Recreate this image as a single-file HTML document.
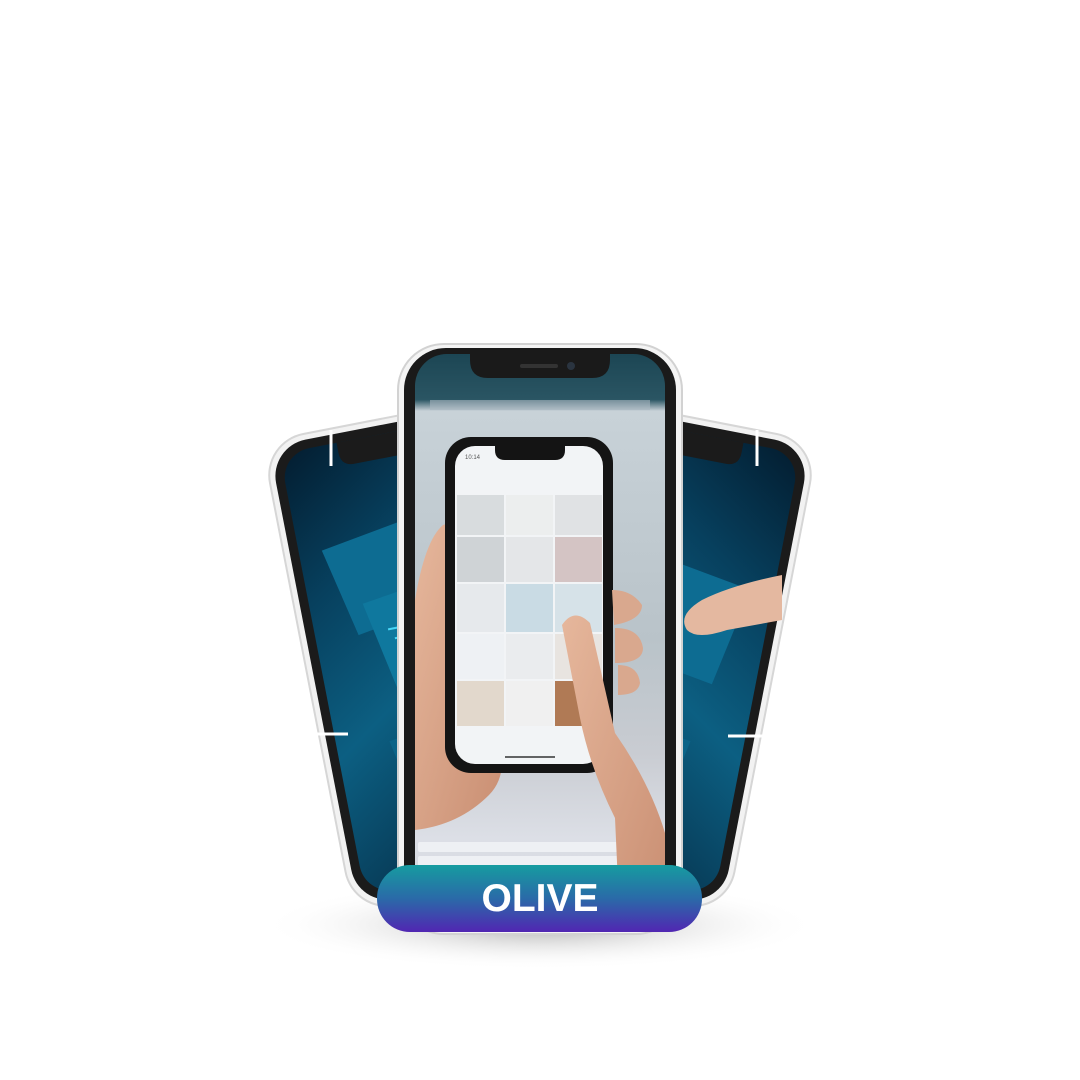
<!DOCTYPE html>
<html><head><meta charset="utf-8"><style>
html,body{margin:0;padding:0;background:#fff;width:1080px;height:1080px;overflow:hidden}
svg{display:block}
</style></head><body>
<svg width="1080" height="1080" viewBox="0 0 1080 1080" xmlns="http://www.w3.org/2000/svg">
<defs>
<linearGradient id="side" x1="0" y1="0" x2="0.4" y2="1">
<stop offset="0" stop-color="#031d30"/><stop offset="0.3" stop-color="#07405e"/><stop offset="0.6" stop-color="#0c5f82"/><stop offset="1" stop-color="#06304a"/>
</linearGradient>
<linearGradient id="badge" x1="0" y1="0" x2="0" y2="1">
<stop offset="0" stop-color="#169ca0"/><stop offset="0.5" stop-color="#2a6aa8"/><stop offset="1" stop-color="#5126b2"/>
</linearGradient>
<linearGradient id="photo" x1="0" y1="0" x2="0" y2="1">
<stop offset="0" stop-color="#1c4654"/><stop offset="0.08" stop-color="#2a5563"/><stop offset="0.1" stop-color="#c8d2d8"/><stop offset="0.5" stop-color="#b9c3c9"/><stop offset="0.7" stop-color="#c9ccd2"/><stop offset="0.85" stop-color="#dcdfe6"/><stop offset="1" stop-color="#d0d3da"/>
</linearGradient>
<radialGradient id="shadow" cx="0.5" cy="0.5" r="0.5">
<stop offset="0" stop-color="#8a8a8a" stop-opacity="0.7"/><stop offset="1" stop-color="#ffffff" stop-opacity="0"/>
</radialGradient>
<linearGradient id="skin" x1="0" y1="0" x2="1" y2="1">
<stop offset="0" stop-color="#e6b79c"/><stop offset="1" stop-color="#c98e72"/>
</linearGradient>
</defs>

<ellipse cx="540" cy="925" rx="280" ry="45" fill="url(#shadow)"/>

<g transform="rotate(-11 262 442)">
<rect x="262" y="442" width="290" height="480" rx="42" fill="#f2f2f2" stroke="#d6d6d6" stroke-width="2"/>
<rect x="268" y="448" width="278" height="468" rx="37" fill="#1b1b1b"/>
<rect x="277" y="457" width="260" height="450" rx="30" fill="url(#side)"/>
<path d="M335 457 h130 v10 q0 14 -14 14 h-102 q-14 0 -14 -14z" fill="#1b1b1b"/>
<polygon points="300,560 420,540 440,630 320,650" fill="#0d6c92"/>
<polygon points="330,620 470,600 480,700 350,720" fill="#0f789e"/>
<polygon points="330,760 480,740 490,840 350,860" fill="#0b6488"/>
<g fill="none" stroke="#4fe0ff" stroke-width="2" opacity="0.9"><path d="M350 650 h40 M355 660 h45 M360 670 h40 M365 680 h38"/></g>
</g>
<g transform="translate(1080 0) scale(-1 1) rotate(-11 262 442)">
<rect x="262" y="442" width="290" height="480" rx="42" fill="#f2f2f2" stroke="#d6d6d6" stroke-width="2"/>
<rect x="268" y="448" width="278" height="468" rx="37" fill="#1b1b1b"/>
<rect x="277" y="457" width="260" height="450" rx="30" fill="url(#side)"/>
<path d="M335 457 h130 v10 q0 14 -14 14 h-102 q-14 0 -14 -14z" fill="#1b1b1b"/>
<polygon points="300,600 420,580 440,680 320,700" fill="#0d6c92"/>
<polygon points="330,760 480,740 490,840 350,860" fill="#0b6488"/>
</g>
<path d="M782 575 q-50 10 -80 25 q-25 15 -15 30 q10 10 40 0 l55 -10z" fill="#e4b8a0"/>

<g stroke="#fff" stroke-width="3"><line x1="331" y1="430" x2="331" y2="466"/><line x1="312" y1="734" x2="348" y2="734"/><line x1="757" y1="430" x2="757" y2="466"/><line x1="728" y1="736" x2="766" y2="736"/></g>

<rect x="398" y="344" width="284" height="590" rx="46" fill="#f4f4f4" stroke="#d2d2d2" stroke-width="2"/>
<rect x="404" y="348" width="272" height="580" rx="42" fill="#1a1a1a"/>
<rect x="415" y="354" width="250" height="570" rx="32" fill="url(#photo)"/>
<rect x="430" y="400" width="220" height="10" fill="#a9b6c0" opacity="0.6"/>
<g fill="#eef0f4"><rect x="418" y="842" width="230" height="10" rx="2"/><rect x="418" y="856" width="230" height="10" rx="2"/></g>
<path d="M415 600 q10 -60 28 -75 q12 -5 14 20 l2 100 q20 60 40 90 q10 40 -10 60 q-30 30 -74 35z" fill="url(#skin)"/>
<rect x="445" y="437" width="168" height="336" rx="26" fill="#141414"/>
<rect x="455" y="446" width="148" height="318" rx="20" fill="#f2f4f6"/>
<path d="M495 446 h70 v4 q0 10 -10 10 h-50 q-10 0 -10 -10z" fill="#141414"/>
<text x="465" y="459" font-family="Liberation Sans, sans-serif" font-size="6" fill="#555">10:14</text>
<g>
<rect x="457" y="495" width="47" height="40" fill="#d8dcde"/><rect x="506" y="495" width="47" height="40" fill="#eceeee"/><rect x="555" y="495" width="47" height="40" fill="#e0e2e4"/>
<rect x="457" y="537" width="47" height="45" fill="#cfd3d6"/><rect x="506" y="537" width="47" height="45" fill="#e4e6e8"/><rect x="555" y="537" width="47" height="45" fill="#d4c4c4"/>
<rect x="457" y="584" width="47" height="48" fill="#e6e9ec"/><rect x="506" y="584" width="47" height="48" fill="#c9dbe4"/><rect x="555" y="584" width="47" height="48" fill="#d6e2e8"/>
<rect x="457" y="634" width="47" height="45" fill="#eef1f4"/><rect x="506" y="634" width="47" height="45" fill="#eaecee"/><rect x="555" y="634" width="47" height="45" fill="#e8e4e0"/>
<rect x="457" y="681" width="47" height="45" fill="#e2d8cc"/><rect x="506" y="681" width="47" height="45" fill="#f0f0f0"/><rect x="555" y="681" width="47" height="45" fill="#b07a55"/>
</g>
<line x1="505" y1="757" x2="555" y2="757" stroke="#333" stroke-width="1.5"/>
<path d="M562 625 q12 -18 28 -2 l25 110 q35 50 50 100 v95 h-45 l-5 -110 q-25 -50 -35 -100z" fill="url(#skin)"/>
<path d="M612 590 q20 0 30 15 q0 15 -28 20z M615 628 q25 0 28 20 q0 15 -28 15z M618 665 q20 0 22 18 q-2 12 -22 12z" fill="#d9a88e"/>
<path d="M470 354 h140 v6 q0 18 -18 18 h-104 q-18 0 -18 -18z" fill="#1a1a1a"/>
<rect x="520" y="364" width="38" height="4" rx="2" fill="#333"/>
<circle cx="571" cy="366" r="4" fill="#2a3440"/>

<rect x="377" y="865" width="325" height="67" rx="33" fill="url(#badge)"/>
<text x="540" y="911" text-anchor="middle" font-family="Liberation Sans, DejaVu Sans, sans-serif" font-weight="bold" font-size="39" fill="#fff">OLIVE</text>
</svg>
</body></html>
